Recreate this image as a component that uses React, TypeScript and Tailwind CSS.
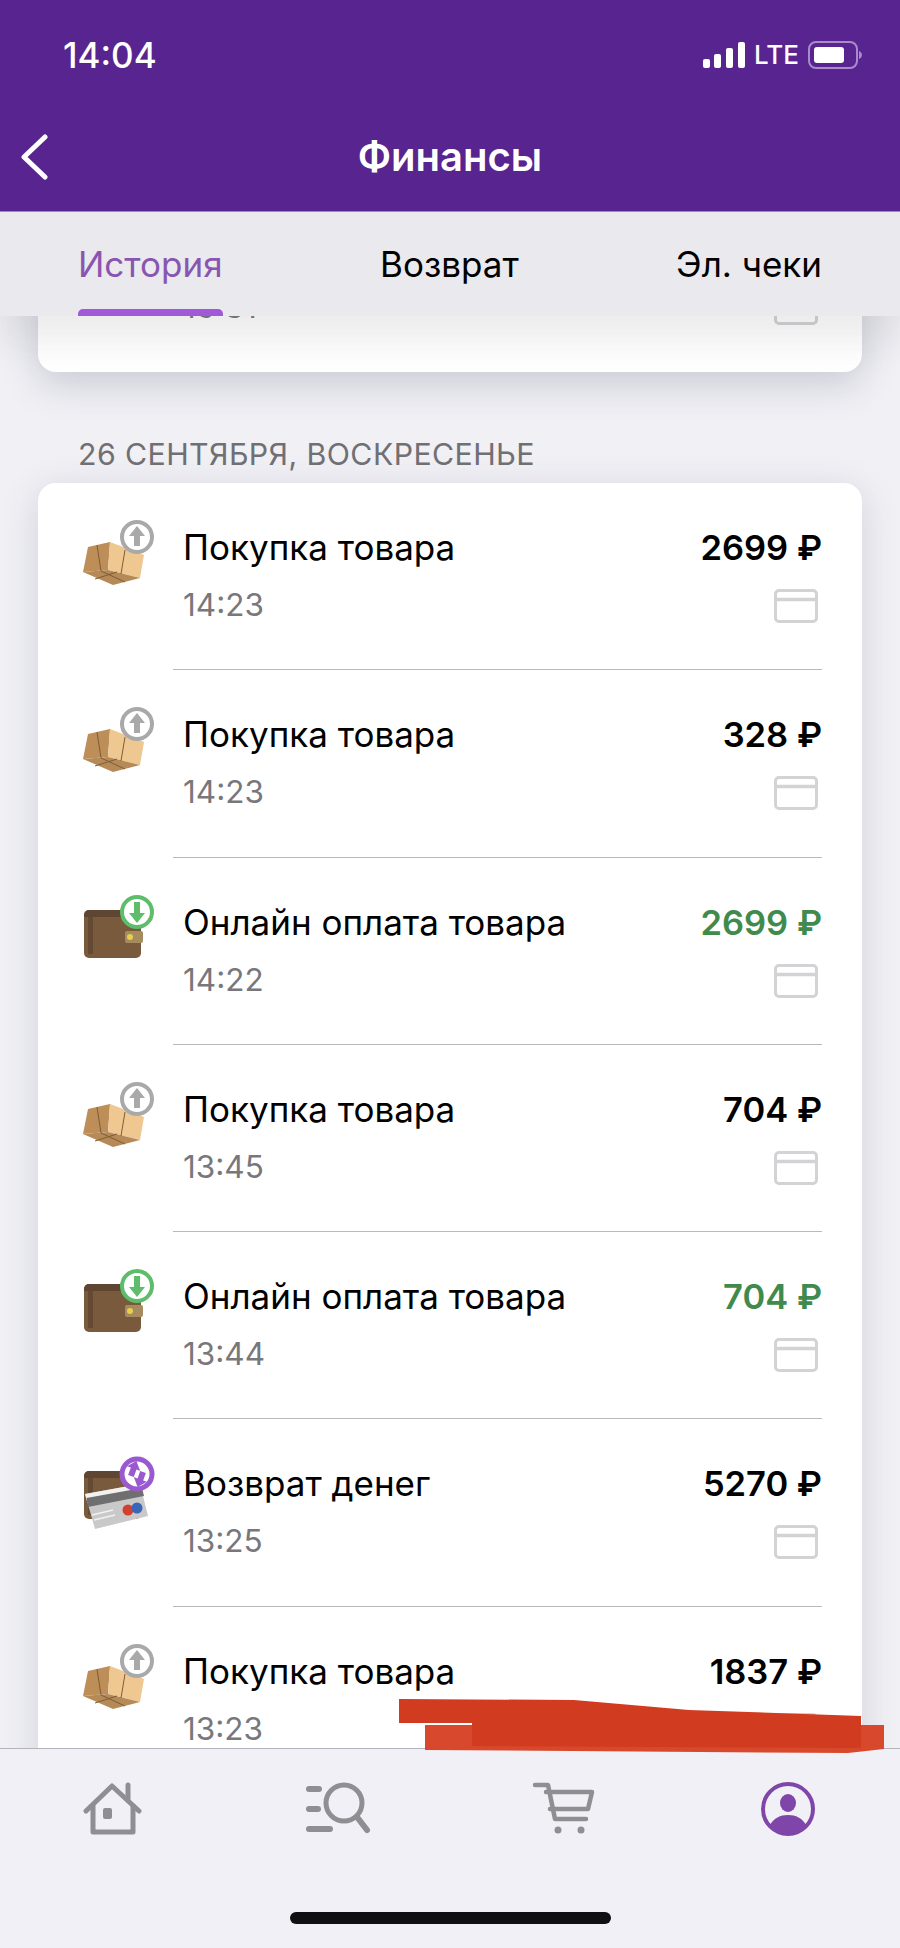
import React from 'react';

type Kind = 'box' | 'wallet' | 'refund';

const rows: { kind: Kind; title: string; time: string; amount: string; green?: boolean }[] = [
  { kind: 'box', title: 'Покупка товара', time: '14:23', amount: '2699 ₽' },
  { kind: 'box', title: 'Покупка товара', time: '14:23', amount: '328 ₽' },
  { kind: 'wallet', title: 'Онлайн оплата товара', time: '14:22', amount: '2699 ₽', green: true },
  { kind: 'box', title: 'Покупка товара', time: '13:45', amount: '704 ₽' },
  { kind: 'wallet', title: 'Онлайн оплата товара', time: '13:44', amount: '704 ₽', green: true },
  { kind: 'refund', title: 'Возврат денег', time: '13:25', amount: '5270 ₽' },
  { kind: 'box', title: 'Покупка товара', time: '13:23', amount: '1837 ₽' },
];

function WalletShape() {
  return (
    <>
      <rect x="4" y="22" width="57" height="48" rx="5" fill="#7a5a3d" />
      <path d="M4 27a5 5 0 0 1 5-5h47a5 5 0 0 1 5 5v2H4z" fill="#5f4632" />
      <rect x="8" y="29" width="5" height="37" fill="#644a33" />
    </>
  );
}

function RowIcon({ kind }: { kind: Kind }) {
  return (
    <svg viewBox="0 0 70 80" className="w-[70px] h-[80px] shrink-0 overflow-visible">
      {kind === 'box' && (
        <>
          <path d="M8 34 30 29 28 57 3 59z" fill="#bd8e58" />
          <path d="M30 29 64 42 60 65 28 57z" fill="#efc791" />
          <path d="M3 59 28 57 60 65 33 72z" fill="#b58a57" />
          <path d="M17 32 21 58 45 69M45 37 41 61M15 66 37 59" fill="none" stroke="#7d5c38" strokeWidth="1" />
          <circle cx="57" cy="24" r="15" fill="#fff" stroke="#a9a9a9" strokeWidth="4" />
          <path d="M57 13 65 23H60V33H54V23H49z" fill="#a9a9a9" />
        </>
      )}
      {kind === 'wallet' && (
        <>
          <WalletShape />
          <rect x="45" y="43" width="18" height="12" rx="2" fill="#a68b60" />
          <circle cx="50" cy="49" r="3" fill="#e6d04c" />
          <circle cx="57" cy="24" r="15" fill="#fff" stroke="#5ebd6a" strokeWidth="4" />
          <path d="M57 35 65 25H60V14H54V25H49z" fill="#5ebd6a" />
        </>
      )}
      {kind === 'refund' && (
        <>
          <WalletShape />
          <path d="M5 45 60 35 68 67 15 80z" fill="#c9c9c9" />
          <path d="M5 45 60 35 62 42 7 52z" fill="#f1f1f1" />
          <path d="M6.500 49 62 39 64 47 8 58z" fill="#6f6f6f" />
          <path d="M12 66 33 61M14 71 35 66" stroke="#f1f1f1" strokeWidth="1.500" />
          <circle cx="48" cy="61" r="5.500" fill="#d2402f" />
          <circle cx="57" cy="59" r="5.500" fill="#3b66b8" />
          <circle cx="57" cy="25" r="15" fill="#fff" stroke="#9b59d0" strokeWidth="5" />
          <g transform="rotate(20 57 25)">
            <path d="M52 13 59 21H55V29H49V21H45zM62 37 55 29H59V21H65V29H69z" fill="#9b59d0" />
          </g>
        </>
      )}
    </svg>
  );
}

function CardGlyph() {
  return (
    <svg viewBox="0 0 44 34" className="w-[44px] h-[34px]">
      <rect x="1.500" y="1.500" width="41" height="31" rx="3.500" fill="none" stroke="#d3d3d6" strokeWidth="3" />
      <path d="M2 10.500H42" stroke="#d3d3d6" strokeWidth="3.500" />
    </svg>
  );
}

function Row({ time, title, amount, kind, green, last }: (typeof rows)[number] & { last?: boolean }) {
  return (
    <div className="flex h-[187.300px] pl-[42px] pr-[40px]">
      <div className="pt-[30px]">
        <RowIcon kind={kind} />
      </div>
      <div className={`ml-[23px] pl-[11px] flex-1 min-w-0 flex justify-between pt-[42px] ${last ? '' : 'border-b border-[#b9b9bd]'}`}>
        <div>
          <div className="text-[35px] leading-[44px] text-black -ml-[1px]">{title}</div>
          <div className="mt-[14px] text-[31.500px] leading-[44px] text-[#77777c] -ml-[1px]">{time}</div>
        </div>
        <div className="flex flex-col items-end">
          <div className={`text-[34.500px] leading-[44px] pt-[1px] font-semibold ${green ? 'text-[#3f8a4c]' : 'text-black'}`}>{amount}</div>
          <div className="mt-[19px] pr-[4px]">
            <CardGlyph />
          </div>
        </div>
      </div>
    </div>
  );
}

export default function App() {
  return (
    <div className="relative w-[900px] h-[1948px] overflow-hidden flex flex-col bg-[#f0f0f5] font-['Inter',sans-serif]">
      {/* Header */}
      <header className="h-[211px] shrink-0 bg-[#58248f] text-white relative z-20">
        <div className="flex items-center justify-between pl-[63px] pr-[38px] pt-[36px]">
          <span className="text-[35px] leading-[38px] font-medium">14:04</span>
          <div className="flex items-center gap-[9px]">
            <svg viewBox="0 0 42 26" className="w-[42px] h-[26px]" fill="#fff">
              <rect x="0" y="17" width="7" height="9" rx="2" />
              <rect x="11" y="12" width="7" height="14" rx="2" />
              <rect x="23" y="6" width="7" height="20" rx="2" />
              <rect x="35" y="0" width="7" height="26" rx="2" />
            </svg>
            <span className="text-[26px] leading-[28px] font-medium">LTE</span>
            <svg viewBox="0 0 54 28" className="w-[54px] h-[28px]">
              <rect x="1" y="1" width="48" height="26" rx="7" fill="none" stroke="#a98bc9" strokeWidth="2" />
              <rect x="6" y="6" width="30" height="16" rx="3" fill="#fff" />
              <path d="M51 10c2 1 3 2.500 3 4s-1 3-3 4z" fill="#a98bc9" />
            </svg>
          </div>
        </div>
        <div className="grid grid-cols-[1fr_auto_1fr] items-center mt-[60px] pl-[20px]">
          <svg viewBox="0 0 28 46" className="w-[28px] h-[46px]" fill="none" stroke="#fff" strokeWidth="5" strokeLinecap="round" strokeLinejoin="round">
            <path d="M25 3 4 23 25 43" />
          </svg>
          <h1 className="text-[40px] leading-[44px] font-semibold -ml-[20px]">Финансы</h1>
        </div>
      </header>

      {/* Tabs */}
      <nav className="h-[105px] shrink-0 bg-[#e9e9ee] border-t border-[#a77fd0] relative z-10 px-[78px] flex justify-between shadow-[0_24px_36px_rgba(60,60,70,0.10)]">
        <div className="flex flex-col justify-between">
          <span className="pt-[30px] text-[35px] leading-[44px] text-[#8a55b0]">История</span>
          <span className="h-[7px] bg-[#a259d9] rounded-t-[5px]" />
        </div>
        <span className="pt-[30px] text-[35px] leading-[44px] text-black">Возврат</span>
        <span className="pt-[30px] text-[35px] leading-[44px] text-black">Эл. чеки</span>
      </nav>

      {/* List */}
      <main className="flex-1 min-h-0 overflow-hidden px-[38px]">
        <div className="-mt-[131.300px] bg-white rounded-[18px] shadow-[0_12px_36px_rgba(70,70,100,0.22)]">
          <Row kind="box" title="Покупка товара" time="16:31" amount="704 ₽" last />
        </div>
        <div className="pt-[64px] pb-[11px] px-[40px] text-[30.300px] leading-[36px] tracking-[0.4px] text-[#6f6f74]">26 СЕНТЯБРЯ, ВОСКРЕСЕНЬЕ</div>
        <div className="bg-white rounded-[18px] shadow-[0_8px_36px_rgba(70,70,100,0.18)]">
          {rows.map((r, i) => (
            <Row key={i} {...r} />
          ))}
        </div>
      </main>

      {/* Bottom tab bar */}
      <footer className="h-[200px] shrink-0 bg-[#f0f0f6] border-t border-[#b4b4ba] relative z-10">
        <div className="grid grid-cols-4 justify-items-center pt-[33px]">
          <svg viewBox="0 0 60 54" className="w-[60px] h-[54px]" fill="none" stroke="#8e8e93" strokeWidth="5" strokeLinecap="round" strokeLinejoin="round">
            <path d="M3 29 29 4 56 29" />
            <path d="M10 24V50H50V24" />
            <path d="M45 3V18" />
            <rect x="20" y="26" width="9" height="11" rx="2" fill="#8e8e93" stroke="none" />
          </svg>
          <svg viewBox="0 0 70 54" className="w-[70px] h-[54px]" fill="none" stroke="#8e8e93" strokeWidth="5" strokeLinecap="round">
            <circle cx="41" cy="21" r="18" />
            <path d="M54 35 64 48" strokeWidth="6" />
            <path d="M6 7H16M6 27H15M6 47H27" strokeWidth="6" />
          </svg>
          <svg viewBox="0 0 64 54" className="w-[64px] h-[54px]" fill="none" stroke="#8e8e93" strokeWidth="4.500" strokeLinecap="round" strokeLinejoin="round">
            <path d="M4 3H17L24 37H55" />
            <path d="M15 10H61L57 27H19" />
            <circle cx="27" cy="48" r="3.500" fill="#8e8e93" stroke="none" />
            <circle cx="50" cy="48" r="3.500" fill="#8e8e93" stroke="none" />
          </svg>
          <svg viewBox="0 0 54 54" className="w-[54px] h-[54px]">
            <circle cx="27" cy="27" r="25" fill="none" stroke="#7f45a8" strokeWidth="4" />
            <ellipse cx="27" cy="21" rx="8" ry="9" fill="#7f45a8" />
            <path d="M9 43c4-7 10-10 18-10s14 3 18 10c-4 6-11 10-18 10S13 49 9 43z" fill="#7f45a8" />
          </svg>
        </div>
        <div className="w-[321px] h-[12px] rounded-full bg-[#101012] mx-auto mt-[76px]" />
      </footer>

      {/* Red scribble over the bottom row */}
      <svg viewBox="0 0 900 1948" className="absolute inset-0 w-[900px] h-[1948px] z-30 pointer-events-none">
        <path d="M425 1725H884V1749L848 1753 425 1750z" fill="#d8482c" />
        <path d="M399 1699 574 1700 689 1710 861 1716V1748L472 1746V1723L399 1723z" fill="#d13c20" />
      </svg>
    </div>
  );
}
